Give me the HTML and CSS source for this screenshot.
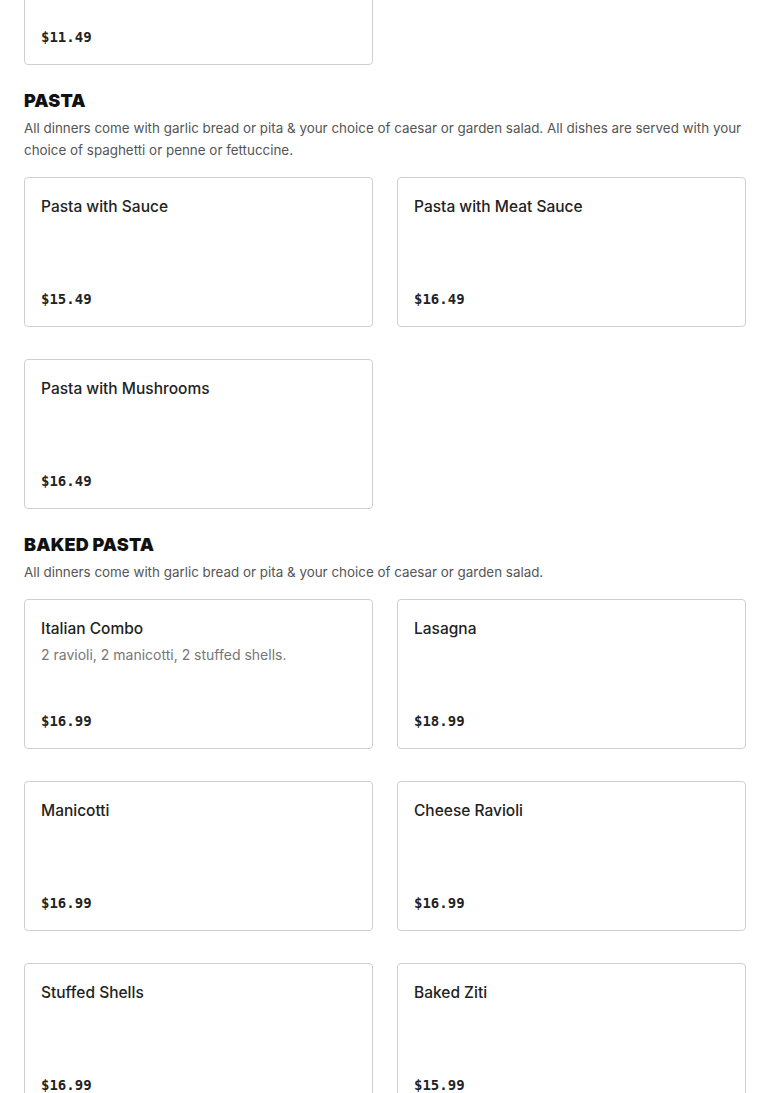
FILE: index.html
```html
<!DOCTYPE html>
<html lang="en">
<head>
<meta charset="utf-8">
<title>Menu</title>
<link rel="stylesheet" href="styles.css">
</head>
<body>
<main class="menu">
  <section class="section">
    <div class="grid">
      <article class="card">
        <h3 class="card-title">Chicken Parmigiana Sub</h3>
        <p class="card-desc">Breaded chicken cutlet topped with marinara sauce and melted mozzarella, on a toasted roll with a side of spaghetti.</p>
        <div class="price">$11.49</div>
      </article>
    </div>
  </section>

  <section class="section">
    <h2 class="section-title">PASTA</h2>
    <p class="section-desc">All dinners come with garlic bread or pita &amp; your choice of caesar or garden salad. All dishes are served with your choice of spaghetti or penne or fettuccine.</p>
    <div class="grid">
      <article class="card">
        <h3 class="card-title">Pasta with Sauce</h3>
        <div class="price">$15.49</div>
      </article>
      <article class="card">
        <h3 class="card-title">Pasta with Meat Sauce</h3>
        <div class="price">$16.49</div>
      </article>
      <article class="card">
        <h3 class="card-title">Pasta with Mushrooms</h3>
        <div class="price">$16.49</div>
      </article>
    </div>
  </section>

  <section class="section">
    <h2 class="section-title">BAKED PASTA</h2>
    <p class="section-desc">All dinners come with garlic bread or pita &amp; your choice of caesar or garden salad.</p>
    <div class="grid">
      <article class="card">
        <h3 class="card-title">Italian Combo</h3>
        <p class="card-desc">2 ravioli, 2 manicotti, 2 stuffed shells.</p>
        <div class="price">$16.99</div>
      </article>
      <article class="card">
        <h3 class="card-title">Lasagna</h3>
        <div class="price">$18.99</div>
      </article>
      <article class="card">
        <h3 class="card-title">Manicotti</h3>
        <div class="price">$16.99</div>
      </article>
      <article class="card">
        <h3 class="card-title">Cheese Ravioli</h3>
        <div class="price">$16.99</div>
      </article>
      <article class="card">
        <h3 class="card-title">Stuffed Shells</h3>
        <div class="price">$16.99</div>
      </article>
      <article class="card">
        <h3 class="card-title">Baked Ziti</h3>
        <div class="price">$15.99</div>
      </article>
    </div>
  </section>
</main>
</body>
</html>
```
FILE: styles.css
```css
html, body {
  margin: 0;
  padding: 0;
  background: #ffffff;
}

body {
  font-family: Inter, "Liberation Sans", sans-serif;
  color: #222222;
  overflow: hidden;
}

.menu {
  padding: 0 24px;
  margin-top: -104px;
}

.section + .section {
  margin-top: 24px;
}

.section-title {
  margin: 0;
  padding-top: 1px;
  font-family: Inter, "Liberation Sans", sans-serif;
  font-weight: 900;
  font-size: 18px;
  line-height: 22px;
  color: #111111;
  letter-spacing: 0.15px;
}

.section-desc {
  margin: 5px 0 0;
  font-size: 13.4px;
  line-height: 22px;
  color: #555555;
}

.section-desc + .grid {
  margin-top: 16px;
}

.grid {
  display: grid;
  grid-template-columns: 1fr 1fr;
  column-gap: 24px;
  row-gap: 32px;
}

.card {
  box-sizing: border-box;
  min-height: 150px;
  padding: 17px 16px 15px;
  border: 1px solid #cfcfcf;
  border-radius: 4px;
  background: #ffffff;
  display: flex;
  flex-direction: column;
}

.card-title {
  margin: 0;
  font-size: 15.5px;
  font-weight: 500;
  line-height: 24px;
  color: #222222;
}

.card-desc {
  margin: 4px 0 0;
  font-size: 14px;
  line-height: 20px;
  color: #767676;
}

.price {
  margin-top: auto;
  padding-top: 23px;
  font-family: "DejaVu Sans Mono", "Liberation Mono", monospace;
  font-weight: bold;
  font-size: 14px;
  line-height: 24px;
  color: #222222;
}
```
